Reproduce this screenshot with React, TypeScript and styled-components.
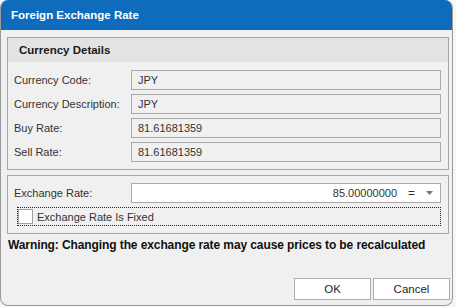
import React from 'react'
import styled, { createGlobalStyle } from 'styled-components'

const GlobalStyle = createGlobalStyle`
  html, body {
    margin: 0;
    padding: 0;
    background: #f7f7f7;
  }
  body {
    font-family: "Liberation Sans", Arial, sans-serif;
    font-size: 11px;
    color: #1f1f1f;
  }
`

const Dialog = styled.div`
  box-sizing: border-box;
  width: 453px;
  height: 306px;
  background: #f0f0f0;
  border: 1px solid #9a9a9a;
  border-top: none;
  border-radius: 8px;
  overflow: hidden;
  display: flex;
  flex-direction: column;
`

const TitleBar = styled.div`
  height: 30px;
  flex: none;
  background: #0f6cbd;
  color: #fff;
  font-weight: bold;
  font-size: 11.5px;
  display: flex;
  align-items: center;
  padding-left: 10px;
  padding-bottom: 1px;
  box-sizing: border-box;
`

const Body = styled.div`
  flex: 1;
  display: flex;
  flex-direction: column;
  padding: 7px 4px 0 6px;
`

const Group = styled.div<{ $top?: number }>`
  box-sizing: border-box;
  width: 442px;
  border: 1px solid #a6a6a6;
  margin-top: ${(p) => p.$top ?? 0}px;
  display: flex;
  flex-direction: column;
  padding-bottom: 7px;
`

const GroupHeader = styled.div`
  height: 24px;
  background: #e3e3e3;
  font-weight: bold;
  font-size: 11.5px;
  display: flex;
  align-items: center;
  padding-left: 11px;
  margin-bottom: 8px;
  color: #1a1a1a;
`

const Rows = styled.div<{ $padTop?: number }>`
  display: flex;
  flex-direction: column;
  gap: 4px;
  padding: ${(p) => p.$padTop ?? 0}px 7px 0 6px;
`

const Row = styled.div`
  display: flex;
  align-items: center;
  height: 20px;
`

const Label = styled.div`
  width: 117px;
  color: #333;
`

const Field = styled.div<{ $white?: boolean }>`
  box-sizing: border-box;
  flex: 1;
  height: 20px;
  border: 1px solid #a9a9a9;
  background: ${(p) => (p.$white ? '#ffffff' : '#f0f0f0')};
  display: flex;
  align-items: center;
  padding: 0 6px;
  color: #333;
`

const Value = styled.span<{ $right?: boolean }>`
  flex: 1;
  text-align: ${(p) => (p.$right ? 'right' : 'left')};
`

const Eq = styled.span`
  margin-left: 11px;
  width: 10px;
  font-size: 12px;
`

const Caret = styled.svg`
  margin-left: 8px;
  margin-right: 1px;
`

const CheckRow = styled.label`
  box-sizing: border-box;
  height: 19px;
  margin: 4px 7px 0 9px;
  border: 1px dotted #222;
  display: flex;
  align-items: center;
  gap: 4px;
  color: #333;
`

const Box = styled.span`
  box-sizing: border-box;
  width: 15px;
  height: 15px;
  background: #fff;
  border: 1px solid #a0a0a0;
`

const Warning = styled.div`
  font-weight: bold;
  font-size: 12px;
  color: #111;
  margin-top: 4px;
  padding-left: 1px;
  letter-spacing: -0.1px;
`

const Buttons = styled.div`
  margin-top: auto;
  margin-bottom: 5px;
  margin-right: -2px;
  display: flex;
  justify-content: flex-end;
  gap: 2px;
`

const Button = styled.button`
  box-sizing: border-box;
  width: 77px;
  height: 22px;
  background: #fff;
  border: 1px solid #adadad;
  font-family: inherit;
  font-size: 11.5px;
  color: #1f1f1f;
  padding: 0;
`

const details = [
  { label: 'Currency Code:', value: 'JPY' },
  { label: 'Currency Description:', value: 'JPY' },
  { label: 'Buy Rate:', value: '81.61681359' },
  { label: 'Sell Rate:', value: '81.61681359' },
]

export default function App() {
  return (
    <>
      <GlobalStyle />
      <Dialog>
        <TitleBar>Foreign Exchange Rate</TitleBar>
        <Body>
          <Group>
            <GroupHeader>Currency Details</GroupHeader>
            <Rows>
              {details.map((d) => (
                <Row key={d.label}>
                  <Label>{d.label}</Label>
                  <Field>
                    <Value>{d.value}</Value>
                  </Field>
                </Row>
              ))}
            </Rows>
          </Group>
          <Group $top={5}>
            <Rows $padTop={7}>
              <Row>
                <Label>Exchange Rate:</Label>
                <Field $white>
                  <Value $right>85.00000000</Value>
                  <Eq>=</Eq>
                  <Caret width="7" height="4" viewBox="0 0 7 4">
                    <path d="M0 0 H7 L3.5 4 Z" fill="#777" />
                  </Caret>
                </Field>
              </Row>
            </Rows>
            <CheckRow>
              <Box />
              Exchange Rate Is Fixed
            </CheckRow>
          </Group>
          <Warning>Warning: Changing the exchange rate may cause prices to be recalculated</Warning>
          <Buttons>
            <Button>OK</Button>
            <Button>Cancel</Button>
          </Buttons>
        </Body>
      </Dialog>
    </>
  )
}
